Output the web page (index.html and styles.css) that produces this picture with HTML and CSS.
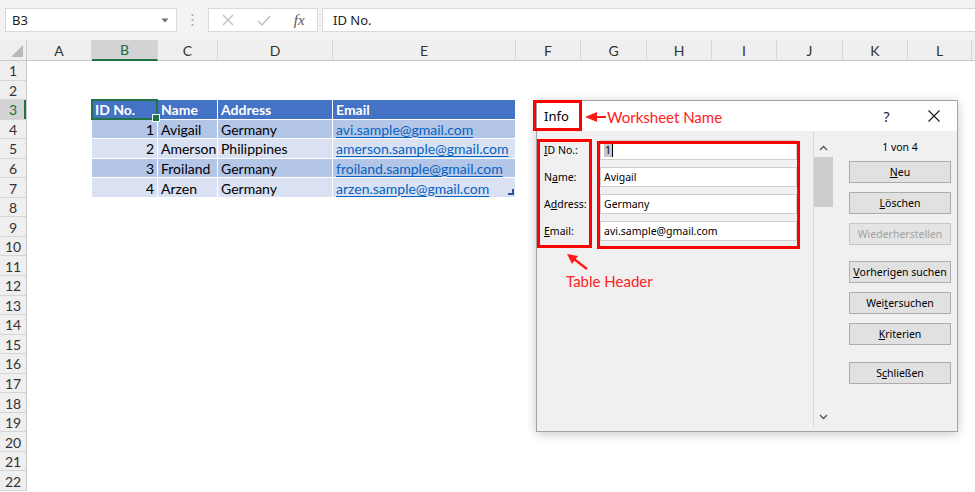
FILE: index.html
```html
<!DOCTYPE html>
<html>
<head>
<meta charset="utf-8">
<link rel="stylesheet" href="styles.css">
</head>
<body>
<div class="toolbar">
  <div class="namebox"><span>B3</span>
    <svg width="8" height="5" viewBox="0 0 8 5"><path d="M0.5 0.5h7L4 4.5z" fill="#6f6f6f"/></svg>
  </div>
  <div class="grip"><svg width="3" height="14" viewBox="0 0 3 14"><circle cx="1.5" cy="2" r="1.1" fill="#a6a6a6"/><circle cx="1.5" cy="7" r="1.1" fill="#a6a6a6"/><circle cx="1.5" cy="12" r="1.1" fill="#a6a6a6"/></svg></div>
  <div class="fxbox">
    <span class="slot"><svg width="12" height="12" viewBox="0 0 12 12"><path d="M1 1l10 10M11 1L1 11" stroke="#bdbdbd" stroke-width="1.2" fill="none"/></svg></span>
    <span class="slot"><svg width="14" height="11" viewBox="0 0 14 11"><path d="M1 6l4 4 8-9" stroke="#bdbdbd" stroke-width="1.3" fill="none"/></svg></span>
    <span class="slot fx">fx</span>
  </div>
  <div class="formula">ID No.</div>
</div>

<div class="colheads">
  <div class="corner"><svg width="12" height="12" viewBox="0 0 12 12"><path d="M12 0V12H0z" fill="#b9b9b9"/></svg></div>
  <div class="ch w65">A</div>
  <div class="ch w66 sel">B</div>
  <div class="ch w60">C</div>
  <div class="ch w115">D</div>
  <div class="ch w183">E</div>
  <div class="ch w65">F</div>
  <div class="ch w66">G</div>
  <div class="ch w65">H</div>
  <div class="ch w65">I</div>
  <div class="ch w66">J</div>
  <div class="ch w65">K</div>
  <div class="ch w64">L</div>
  <div class="ch rest"></div>
</div>

<div class="sheet">
  <div class="rowheads">
    <div class="rh">1</div><div class="rh">2</div><div class="rh sel">3</div><div class="rh">4</div>
    <div class="rh">5</div><div class="rh">6</div><div class="rh">7</div><div class="rh">8</div>
    <div class="rh">9</div><div class="rh">10</div><div class="rh">11</div><div class="rh">12</div>
    <div class="rh">13</div><div class="rh">14</div><div class="rh">15</div><div class="rh">16</div>
    <div class="rh">17</div><div class="rh">18</div><div class="rh">19</div><div class="rh">20</div>
    <div class="rh">21</div><div class="rh">22</div>
  </div>
  <div class="canvas">
    <div class="xtable">
      <div class="c hd active">ID No.</div><div class="c hd">Name</div><div class="c hd">Address</div><div class="c hd">Email</div>
      <div class="c d1 num">1</div><div class="c d1">Avigail</div><div class="c d1">Germany</div><div class="c d1 link">avi.sample@gmail.com</div>
      <div class="c d2 num">2</div><div class="c d2">Amerson</div><div class="c d2">Philippines</div><div class="c d2 link">amerson.sample@gmail.com</div>
      <div class="c d1 num">3</div><div class="c d1">Froiland</div><div class="c d1">Germany</div><div class="c d1 link">froiland.sample@gmail.com</div>
      <div class="c d2 num">4</div><div class="c d2">Arzen</div><div class="c d2">Germany</div><div class="c d2 link last">arzen.sample@gmail.com</div>
    </div>
  </div>
</div>

<div class="dialog">
  <div class="titlebar">
    <span class="title">Info</span>
    <span class="tbtn help">?</span>
    <span class="tbtn"><svg width="12" height="12" viewBox="0 0 12 12"><path d="M0.5 0.5l11 11M11.5 0.5l-11 11" stroke="#1a1a1a" stroke-width="1.1" fill="none"/></svg></span>
  </div>
  <div class="dbody">
    <div class="form">
      <div class="lbl"><u>I</u>D No.:</div><div class="tb"><span class="hl">1</span><span class="caret"></span></div>
      <div class="lbl">N<u>a</u>me:</div><div class="tb">Avigail</div>
      <div class="lbl">A<u>d</u>dress:</div><div class="tb">Germany</div>
      <div class="lbl"><u>E</u>mail:</div><div class="tb">avi.sample@gmail.com</div>
    </div>
    <div class="vscroll">
      <div class="sb-up"><svg width="9" height="6" viewBox="0 0 9 6"><path d="M1 5l3.5-3.5L8 5" stroke="#555" stroke-width="1.3" fill="none"/></svg></div>
      <div class="thumb"></div>
      <div class="sb-space"></div>
      <div class="sb-down"><svg width="9" height="6" viewBox="0 0 9 6"><path d="M1 1l3.5 3.5L8 1" stroke="#555" stroke-width="1.3" fill="none"/></svg></div>
    </div>
    <div class="actions">
      <div class="count">1 von 4</div>
      <div class="btn"><u>N</u>eu</div>
      <div class="btn g9"><u>L</u>öschen</div>
      <div class="btn g9 disabled">Wiederherstellen</div>
      <div class="btn g16"><u>V</u>orherigen suchen</div>
      <div class="btn g9">Wei<u>t</u>ersuchen</div>
      <div class="btn g9"><u>K</u>riterien</div>
      <div class="btn g17">S<u>c</u>hließen</div>
    </div>
  </div>

  <div class="ann ann-info"></div>
  <div class="ann ann-labels"></div>
  <div class="ann ann-fields"></div>
  <svg class="arrow-ws" width="22" height="12" viewBox="0 0 22 12"><path d="M0 6L12 1V11z" fill="#ff1a1a"/><path d="M10 6H21" stroke="#ff1a1a" stroke-width="2"/></svg>
  <div class="note note-ws">Worksheet Name</div>
  <svg class="arrow-th" width="24" height="19" viewBox="0 0 24 19"><path d="M2 2L13 4L7 12z" fill="#ff1a1a"/><path d="M9 7L22 17" stroke="#ff1a1a" stroke-width="2.4"/></svg>
  <div class="note note-th">Table Header</div>
</div>
</body>
</html>
```

FILE: styles.css
```css
* { box-sizing: border-box; }
html, body { margin: 0; padding: 0; }
body {
  width: 975px;
  height: 492px;
  overflow: hidden;
  position: relative;
  background: #ffffff;
  font-family: Lato, "Liberation Sans", sans-serif;
  color: #000;
}

/* ---------- formula bar ---------- */
.toolbar {
  height: 40px;
  background: #f3f3f3;
  display: flex;
  align-items: center;
  padding-left: 5px;
  font-family: "Noto Sans", sans-serif;
  font-size: 13px;
  color: #222;
}
.namebox {
  width: 172px;
  height: 24px;
  background: #fff;
  border: 1px solid #d9d9d9;
  display: flex;
  align-items: center;
  justify-content: space-between;
  padding: 0 7px 0 6px;
}
.grip {
  width: 31px;
  display: flex;
  justify-content: center;
}
.fxbox {
  width: 110px;
  height: 24px;
  background: #fff;
  border: 1px solid #d9d9d9;
  display: flex;
  align-items: center;
  padding-left: 1px;
}
.slot {
  width: 36px;
  display: flex;
  justify-content: center;
  align-items: center;
}
.fx {
  font-family: "Liberation Serif", serif;
  font-style: italic;
  font-size: 15px;
  color: #555;
}
.formula {
  margin-left: 4px;
  flex: 1;
  height: 24px;
  background: #fff;
  border: 1px solid #d9d9d9;
  border-right: none;
  padding-left: 10px;
  display: flex;
  align-items: center;
}

/* ---------- column headers ---------- */
.colheads {
  display: flex;
  height: 21px;
  background: #efefef;
  border-bottom: 1px solid #c9c9c9;
  font-family: Lato, sans-serif;
  font-size: 14px;
  color: #333;
}
.corner {
  width: 27px;
  border-right: 1px solid #c9c9c9;
  display: flex;
  align-items: flex-end;
  justify-content: flex-end;
  padding: 0 3px 3px 0;
}
.ch {
  border-right: 1px solid #d6d6d6;
  display: flex;
  align-items: center;
  justify-content: center;
}
.ch.sel {
  background: #d3d3d3;
  color: #1e6b3e;
  border-bottom: 2px solid #217346;
  margin-bottom: -1px;
}
.w60 { width: 60px; }
.w64 { width: 64px; }
.w65 { width: 65px; }
.w66 { width: 66px; }
.w115 { width: 115px; }
.w183 { width: 183px; }
.rest { flex: 1; border-right: none; }

/* ---------- sheet ---------- */
.sheet {
  display: flex;
}
.rowheads {
  width: 27px;
  background: #efefef;
  border-right: 1px solid #c9c9c9;
  font-size: 14px;
  color: #333;
}
.rh {
  height: 19.55px;
  border-bottom: 1px solid #d6d6d6;
  display: flex;
  align-items: center;
  justify-content: center;
  padding-top: 1px;
}
.rh.sel {
  background: #d3d3d3;
  color: #1e6b3e;
  box-shadow: inset -2px 0 0 #217346;
}
.canvas {
  flex: 1;
  padding-top: 39.1px;
  padding-left: 65px;
}
.xtable {
  display: grid;
  grid-template-columns: 66px 60px 115px 183px;
  grid-auto-rows: 19.55px;
  font-size: 14px;
}
.c {
  border-right: 1px solid #fff;
  border-bottom: 1px solid #fff;
  padding: 1px 3px 0 3px;
  display: flex;
  align-items: center;
  white-space: nowrap;
  overflow: visible;
  position: relative;
}
.hd {
  background: #4472c4;
  color: #fff;
  font-weight: bold;
}
.d1 { background: #b4c6e7; }
.d2 { background: #d9e1f2; }
.num { justify-content: flex-end; }
.link {
  color: #0563c1;
  text-decoration: underline;
  text-underline-offset: 2px;
}
.active::after {
  content: "";
  position: absolute;
  left: -1px;
  top: -1px;
  right: -1px;
  bottom: -1px;
  border: 2px solid #217346;
}
.active::before {
  content: "";
  position: absolute;
  right: -3px;
  bottom: -3px;
  width: 6px;
  height: 6px;
  background: #217346;
  border: 1px solid #fff;
  z-index: 2;
}
.last::after {
  content: "";
  position: absolute;
  right: 1px;
  bottom: 2px;
  width: 4px;
  height: 4px;
  border-right: 2px solid #2f4f9a;
  border-bottom: 2px solid #2f4f9a;
}

/* ---------- dialog ---------- */
.dialog {
  position: absolute;
  left: 536px;
  top: 100px;
  width: 422px;
  height: 332px;
  border: 1px solid #a3a3a3;
  background: #f0f0f0;
  box-shadow: 0 2px 10px rgba(0, 0, 0, 0.22);
  font-family: "Noto Sans", sans-serif;
  font-size: 10.5px;
  color: #000;
}
.titlebar {
  height: 30px;
  background: #fff;
  display: flex;
  align-items: center;
}
.title {
  margin-left: 7px;
  font-size: 13px;
  flex: 1;
}
.tbtn {
  width: 47px;
  display: flex;
  justify-content: center;
  align-items: center;
}
.help {
  font-size: 14px;
  color: #1a1a1a;
}
.dbody {
  display: flex;
  height: 300px;
}
.form {
  width: 276px;
  padding: 9px 16px 0 7px;
  display: grid;
  grid-template-columns: 56px 197px;
  grid-auto-rows: 20px;
  row-gap: 7px;
  align-content: start;
}
.lbl {
  display: flex;
  align-items: center;
}
.tb {
  background: #fff;
  border: 1px solid #cfcfcf;
  padding-left: 3px;
  display: flex;
  align-items: center;
}
.hl {
  background: #c9c9c9;
  padding: 0 1px;
}
.caret {
  width: 1px;
  height: 13px;
  background: #000;
}
u {
  text-decoration: underline;
  text-underline-offset: 1px;
}
.vscroll {
  width: 20px;
  height: 296px;
  border-left: 1px solid #dadada;
  display: flex;
  flex-direction: column;
}
.sb-up {
  height: 26px;
  padding-top: 8px;
  display: flex;
  align-items: center;
  justify-content: center;
}
.thumb {
  height: 50px;
  background: #cdcdcd;
}
.sb-space { flex: 1; }
.sb-down {
  height: 20px;
  display: flex;
  align-items: center;
  justify-content: center;
}
.actions {
  padding-left: 16px;
  display: flex;
  flex-direction: column;
  width: 118px;
}
.count {
  height: 30px;
  padding-top: 2px;
  display: flex;
  align-items: center;
  justify-content: center;
  width: 102px;
}
.btn {
  width: 102px;
  height: 22px;
  background: #e1e1e1;
  border: 1px solid #adadad;
  display: flex;
  align-items: center;
  justify-content: center;
}
.btn.disabled {
  color: #a2a2a2;
  border-color: #c6c6c6;
  background: #e4e4e4;
}
.g9 { margin-top: 9px; }
.g16 { margin-top: 16px; }
.g17 { margin-top: 17px; }

/* ---------- annotations ---------- */
.ann {
  position: absolute;
  border: 3px solid #ff0000;
}
.ann-info { left: -4px; top: -1px; width: 49px; height: 31px; }
.ann-labels { left: 0; top: 38px; width: 55px; height: 109px; }
.ann-fields { left: 60px; top: 40px; width: 203px; height: 108px; }
.arrow-ws { position: absolute; left: 48px; top: 10px; }
.arrow-th { position: absolute; left: 28px; top: 151px; }
.note {
  position: absolute;
  font-family: Lato, sans-serif;
  font-size: 15px;
  line-height: 20px;
  color: #ff2020;
  white-space: nowrap;
}
.note-ws { left: 70px; top: 6px; }
.note-th { left: 29px; top: 170px; }
```
